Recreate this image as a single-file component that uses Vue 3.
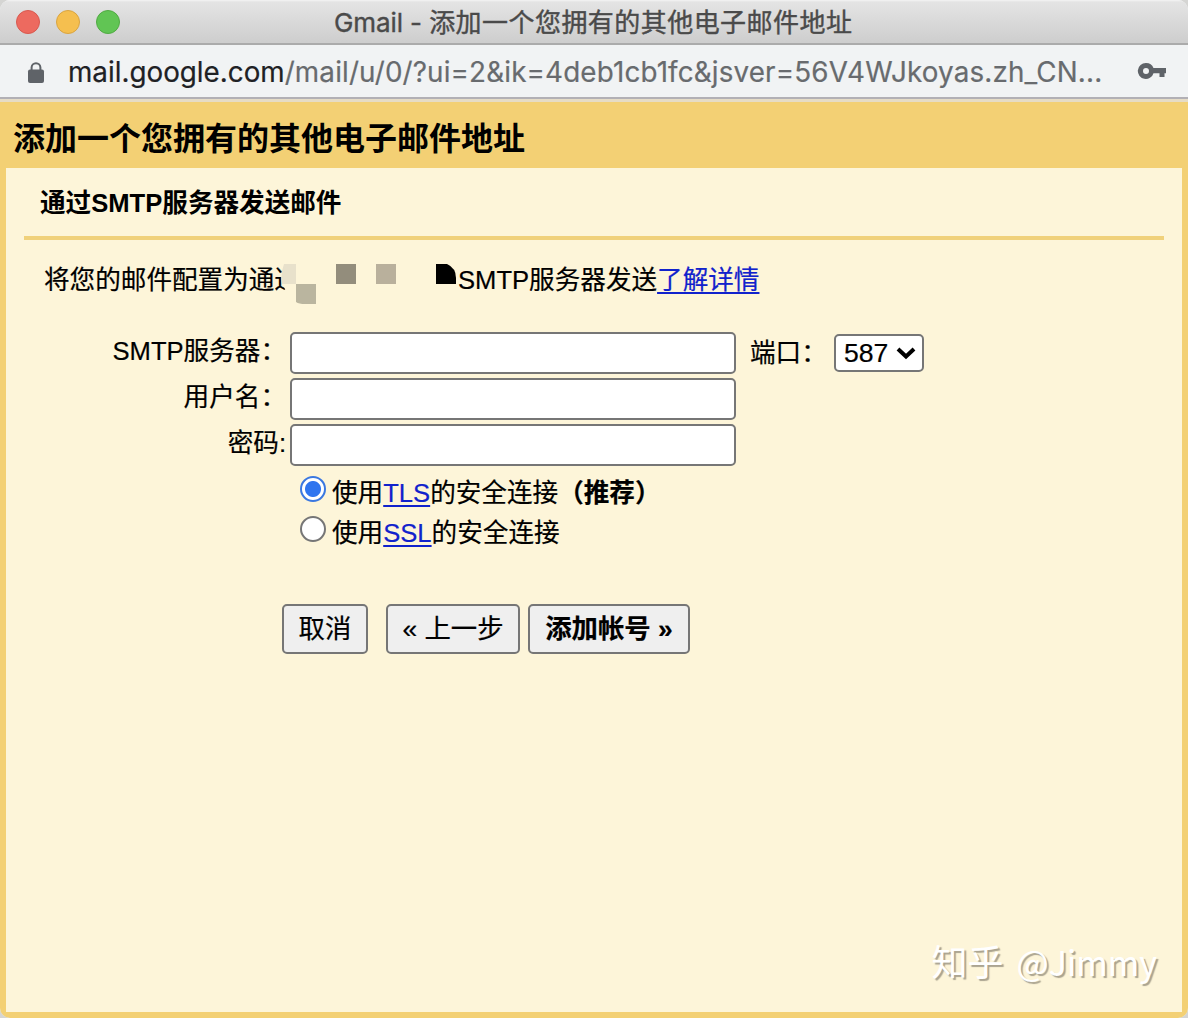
<script setup>
import { ref } from 'vue'

const server = ref('')
const username = ref('')
const password = ref('')
const port = ref('587')
const security = ref('tls')
</script>

<template>
  <div class="window">
    <header class="titlebar">
      <div class="lights">
        <span class="light red"></span>
        <span class="light yellow"></span>
        <span class="light green"></span>
      </div>
      <div class="title"><span class="app">Gmail - </span><span class="page">添加一个您拥有的其他电子邮件地址</span></div>
    </header>

    <div class="address">
      <svg class="lock" width="18" height="24" viewBox="0 0 18 24">
        <path d="M4.6 9V6.6a4.4 4.4 0 0 1 8.8 0V9" fill="none" stroke="#5f6368" stroke-width="2" />
        <rect x="1" y="8.400" width="16" height="13.600" rx="2" fill="#5f6368" />
      </svg>
      <div class="url"><span class="host">mail.google.com</span><span class="path">/mail/u/0/?ui=2&amp;ik=4deb1cb1fc&amp;jsver=56V4WJkoyas.zh_CN...</span></div>
      <svg class="key" width="30" height="18" viewBox="0 0 30 18">
        <path fill-rule="evenodd" fill="#5f6368" d="M9 1a8 8 0 0 1 7.500 5H29v5.200h-1.500V15h-5v-3.800h-6A8 8 0 1 1 9 1zM9 6a3 3 0 1 0 0 6 3 3 0 0 0 0-6z" />
      </svg>
    </div>

    <main class="frame">
      <h1>添加一个您拥有的其他电子邮件地址</h1>
      <section class="panel">
        <h2>通过SMTP服务器发送邮件</h2>
        <div class="intro">
          <span class="lead">将您的邮件配置为通过</span>
          <svg class="mosaic" width="175" height="44" viewBox="0 0 175 44">
            <path d="M2 3h20v37H6q0-9-4-16z" fill="#fdf5d9" />
            <path d="M3 3h12v20H1q-2-9 2-20z" fill="#e8e1cb" />
            <path d="M15 23h20v20H24q-6 0-9-2z" fill="#bab59f" />
            <path d="M55 3h20v20H55z" fill="#938d7c" />
            <path d="M95 3h20v20H95z" fill="#b9b09c" />
            <path d="M155 3h11q9 4 9 14v6h-20z" fill="#000" />
          </svg>
          <span>SMTP服务器发送<a href="#">了解详情</a></span>
        </div>

        <div class="row">
          <label for="server">SMTP服务器：</label>
          <input id="server" v-model="server" type="text" />
          <span class="port">端口：</span>
          <div class="select">
            <span>{{ port }}</span>
            <svg width="20" height="14" viewBox="0 0 20 14"><path d="M2 3l8 7.500L18 3" fill="none" stroke="#000" stroke-width="4" /></svg>
          </div>
        </div>
        <div class="row">
          <label for="user">用户名：</label>
          <input id="user" v-model="username" type="text" />
        </div>
        <div class="row">
          <label for="pass">密码:</label>
          <input id="pass" v-model="password" type="password" />
        </div>

        <div class="options">
          <div class="option" @click="security = 'tls'">
            <span class="radio" :class="{ on: security === 'tls' }"></span>
            <span>使用<a href="#">TLS</a>的安全连接<b>（推荐）</b></span>
          </div>
          <div class="option" @click="security = 'ssl'">
            <span class="radio" :class="{ on: security === 'ssl' }"></span>
            <span>使用<a href="#">SSL</a>的安全连接</span>
          </div>
        </div>

        <div class="buttons">
          <button class="cancel">取消</button>
          <button class="back">« 上一步</button>
          <button class="add">添加帐号 »</button>
        </div>

        <div class="mark">知乎 <span class="handle">@Jimmy</span></div>
      </section>
    </main>
  </div>
</template>

<style>
body {
  margin: 0;
  background: #d5d5d3;
}
</style>

<style scoped>
* {
  box-sizing: border-box;
}
.window {
  width: 1188px;
  height: 1018px;
  display: flex;
  flex-direction: column;
  overflow: hidden;
  border-radius: 10px;
  background: #f1f3f4;
  font-family: "Liberation Sans", "Noto Sans CJK SC", sans-serif;
  font-size: 25.6px;
  color: #000;
}
.titlebar {
  flex: none;
  height: 45px;
  display: grid;
  grid-template-columns: 334px 1fr;
  background: linear-gradient(#f4f4f4 0, #e4e4e4 2px, #cecece 42px);
  border-bottom: 2px solid #ababab;
}
.lights {
  display: flex;
  gap: 16px;
  padding: 10px 0 0 16px;
}
.light {
  width: 24px;
  height: 24px;
  border-radius: 50%;
}
.red { background: #ed6a5f; border: 1px solid #d8594f; }
.yellow { background: #f5bf4f; border: 1px solid #d9a441; }
.green { background: #61c554; border: 1px solid #51aa43; }
.title {
  height: 43px;
  line-height: 46px;
  white-space: pre;
  color: #4a4a4a;
  font-family: Inter, "Noto Sans CJK SC", sans-serif;
  font-size: 26px;
  -webkit-text-stroke: 0.4px currentColor;
}
.app {
  letter-spacing: -0.1px;
}
.page {
  letter-spacing: 0.45px;
}
.address {
  flex: none;
  height: 54px;
  display: flex;
  align-items: flex-start;
  background: #f1f3f4;
  border-bottom: 2px solid #b2b0b5;
  font-family: Inter, "Noto Sans CJK SC", sans-serif;
}
.lock {
  flex: none;
  margin: 16px 0 0 27px;
}
.url {
  flex: none;
  width: 1048px;
  margin: 0 0 0 23px;
  line-height: 55px;
  font-size: 27.8px;
  white-space: nowrap;
  -webkit-text-stroke: 0.2px currentColor;
}
.host { color: #202124; }
.path { color: #686b6e; letter-spacing: 0.15px; }
.key {
  flex: none;
  margin: 17px 0 0 21px;
}
.frame {
  flex: 1;
  display: flex;
  flex-direction: column;
  padding: 0 6px 6px;
  background: #f3d074;
  border-top: 3px solid #e6dcc6;
}
h1 {
  flex: none;
  height: 66px;
  margin: 0;
  padding-left: 7px;
  font-size: 32px;
  line-height: 74px;
}
.panel {
  flex: 1;
  display: flex;
  flex-direction: column;
  background: #fdf5d9;
}
h2 {
  flex: none;
  height: 72px;
  margin: 0 18px;
  padding-left: 16px;
  border-bottom: 4px solid #f0d17b;
  font-size: 25.6px;
  line-height: 71px;
}
.intro {
  flex: none;
  height: 90px;
  display: flex;
  padding-left: 38px;
  line-height: 80px;
  white-space: nowrap;
  -webkit-text-stroke: 0.2px currentColor;
}
.lead {
  flex: none;
  width: 256px;
}
.mosaic {
  position: relative;
  flex: none;
  margin: 21px 2px 0 -19px;
}
a {
  color: #1122cc;
  text-decoration: underline;
  text-decoration-thickness: 2px;
  text-underline-offset: 3px;
}
.row {
  flex: none;
  height: 46px;
  display: flex;
  align-items: flex-start;
  padding-top: 2px;
}
label {
  width: 280px;
  height: 40px;
  text-align: right;
  line-height: 39px;
  white-space: nowrap;
  -webkit-text-stroke: 0.2px currentColor;
}
input {
  width: 446px;
  height: 42px;
  margin: 0 0 0 4px;
  padding: 2px 6px;
  border: 2px solid #767676;
  border-radius: 5px;
  background: #fff;
  font: inherit;
  outline: none;
}
.port {
  width: 84px;
  margin-left: 14px;
  line-height: 43px;
  white-space: nowrap;
  -webkit-text-stroke: 0.2px currentColor;
}
.select {
  width: 90px;
  height: 38px;
  display: flex;
  align-items: center;
  justify-content: space-between;
  margin-top: 2px;
  padding: 0 6px 0 8px;
  border: 2px solid #767676;
  border-radius: 5px;
  background: #fff;
  font-size: 26.6px;
  -webkit-text-stroke: 0.2px currentColor;
}
.options {
  flex: none;
  padding: 4px 0 0 294px;
  -webkit-text-stroke: 0.2px currentColor;
}
.option {
  height: 40px;
  display: flex;
  gap: 6px;
  line-height: 43px;
  white-space: nowrap;
}
.radio {
  flex: none;
  width: 26px;
  height: 26px;
  margin-top: 4px;
  border: 2px solid #767676;
  border-radius: 50%;
  background: #fff;
}
.radio.on {
  border-color: #3b78e0;
  background: radial-gradient(circle, #2f75ef 7.5px, #fff 8.5px);
}
.buttons {
  flex: none;
  display: flex;
  margin: 52px 0 0 276px;
}
button {
  height: 50px;
  padding: 0 0 5px;
  border: 2px solid #767676;
  border-radius: 5px;
  background: #efefef;
  color: #000;
  font-family: inherit;
  font-size: 26.4px;
  white-space: nowrap;
  -webkit-text-stroke: 0.2px currentColor;
}
.cancel { width: 86px; margin-right: 18px; }
.back { width: 134px; margin-right: 8px; }
.add { width: 162px; font-weight: bold; }
.mark {
  margin-top: auto;
  padding: 0 25px 23px;
  text-align: right;
  font-family: "Noto Sans CJK SC", sans-serif;
  font-size: 36px;
  line-height: 54px;
  color: #fff;
  text-shadow: 2px 2px 1px #aaa38f;
}
.handle {
  margin-left: 5px;
  font-size: 34px;
}
</style>
